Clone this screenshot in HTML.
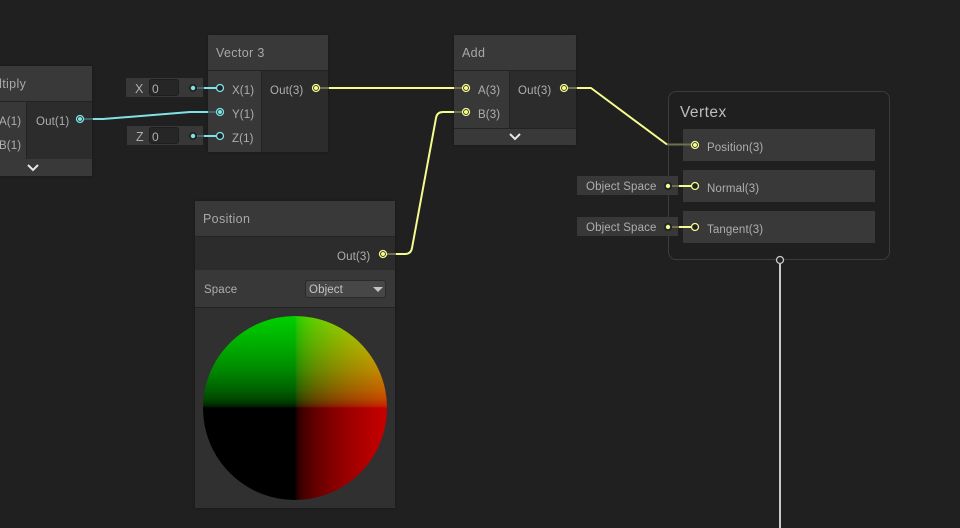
<!DOCTYPE html>
<html><head><meta charset="utf-8"><style>
html,body{margin:0;padding:0;width:960px;height:528px;overflow:hidden;background:#202020}
body{font-family:"Liberation Sans",sans-serif;color:#aeaeae;font-size:11.500px;letter-spacing:.12px}
.b{position:absolute;box-sizing:border-box}
.t{position:absolute;white-space:nowrap;line-height:14px;margin-top:.5px}
.h{font-size:12.500px;letter-spacing:.35px;color:#a8a8a8;margin-top:0}
.v{margin-top:0}
</style></head><body>

<!-- Multiply -->
<div class="b" style="left:-10px;top:66px;width:102px;height:110px;background:#2c2c2c;box-shadow:0 0 2px #181818"></div>
<div class="b" style="left:-10px;top:66px;width:102px;height:36px;background:#393939;border-bottom:1px solid #232323"></div>
<div class="b" style="left:-10px;top:102px;width:37px;height:57px;background:#383838;border-right:1px solid #232323"></div>
<div class="b" style="left:-10px;top:159px;width:102px;height:17px;background:#393939"></div>
<div class="t h" style="left:-19px;top:77px">Multiply</div>
<div class="t" style="left:-1px;top:114px">A(1)</div>
<div class="t" style="left:-1px;top:138px">B(1)</div>
<div class="t" style="left:36px;top:114px">Out(1)</div>

<!-- Vector 3 -->
<div class="b" style="left:208px;top:35px;width:120px;height:117px;background:#2c2c2c;box-shadow:0 0 2px #181818"></div>
<div class="b" style="left:208px;top:35px;width:120px;height:36px;background:#393939;border-bottom:1px solid #232323"></div>
<div class="b" style="left:208px;top:71px;width:54px;height:81px;background:#383838;border-right:1px solid #232323"></div>
<div class="t h" style="left:216px;top:46px">Vector 3</div>
<div class="t" style="left:232px;top:83px">X(1)</div>
<div class="t" style="left:232px;top:107px">Y(1)</div>
<div class="t" style="left:232px;top:131px">Z(1)</div>
<div class="t" style="left:270px;top:83px">Out(3)</div>

<!-- X / Z chips -->
<div class="b" style="left:126px;top:78px;width:77px;height:19px;background:#383838"></div>
<div class="b" style="left:149px;top:79px;width:30px;height:17px;background:#262626;border:1px solid #1e1e1e;border-radius:3px"></div>
<div class="t" style="left:135px;top:81px;font-size:12.500px">X</div>
<div class="t" style="left:152px;top:81px;font-size:12px">0</div>
<div class="b" style="left:127px;top:126px;width:76px;height:19px;background:#383838"></div>
<div class="b" style="left:149px;top:127px;width:30px;height:17px;background:#262626;border:1px solid #1e1e1e;border-radius:3px"></div>
<div class="t" style="left:136px;top:129px;font-size:12.500px">Z</div>
<div class="t" style="left:152px;top:129px;font-size:12px">0</div>

<!-- Add -->
<div class="b" style="left:454px;top:35px;width:122px;height:110px;background:#2c2c2c;box-shadow:0 0 2px #181818"></div>
<div class="b" style="left:454px;top:35px;width:122px;height:36px;background:#393939;border-bottom:1px solid #232323"></div>
<div class="b" style="left:454px;top:71px;width:56px;height:57px;background:#383838;border-right:1px solid #232323"></div>
<div class="b" style="left:454px;top:128px;width:122px;height:17px;background:#393939;border-top:1px solid #232323"></div>
<div class="t h" style="left:462px;top:46px">Add</div>
<div class="t" style="left:478px;top:83px">A(3)</div>
<div class="t" style="left:478px;top:107px">B(3)</div>
<div class="t" style="left:518px;top:83px">Out(3)</div>

<!-- Vertex -->
<div class="b" style="left:668px;top:91px;width:222px;height:169px;background:#1f1f1f;border:1px solid #3c3c3c;border-radius:8px"></div>
<div class="t v" style="left:680px;top:104px;font-size:15.500px;line-height:17px;letter-spacing:.45px;color:#bdbdbd">Vertex</div>
<div class="b" style="left:683px;top:129px;width:192px;height:32px;background:#393939"></div>
<div class="b" style="left:683px;top:170px;width:192px;height:32px;background:#393939"></div>
<div class="b" style="left:683px;top:211px;width:192px;height:32px;background:#393939"></div>
<div class="t v" style="left:707px;top:141px">Position(3)</div>
<div class="t v" style="left:707px;top:182px">Normal(3)</div>
<div class="t v" style="left:707px;top:223px">Tangent(3)</div>
<div class="b" style="left:577px;top:176px;width:101px;height:19px;background:#383838"></div>
<div class="b" style="left:577px;top:217px;width:101px;height:19px;background:#383838"></div>
<div class="t" style="left:586px;top:179px">Object Space</div>
<div class="t" style="left:586px;top:220px">Object Space</div>

<!-- Position -->
<div class="b" style="left:195px;top:201px;width:200px;height:307px;background:#303030;box-shadow:0 0 2px #181818"></div>
<div class="b" style="left:195px;top:201px;width:200px;height:36px;background:#393939;border-bottom:1px solid #232323"></div>
<div class="b" style="left:195px;top:237px;width:200px;height:33px;background:#2c2c2c"></div>
<div class="b" style="left:195px;top:270px;width:200px;height:38px;background:#383838;border-bottom:1px solid #232323"></div>
<div class="t h" style="left:203px;top:212px">Position</div>
<div class="t" style="left:337px;top:249px">Out(3)</div>
<div class="t" style="left:204px;top:282px">Space</div>
<div class="b" style="left:305px;top:280px;width:81px;height:18px;background:#474747;border:1px solid #2a2a2a;border-radius:3px"></div>
<div class="t" style="left:309px;top:282px;color:#c4c4c4">Object</div>
<div class="b" style="left:373px;top:287px;width:0;height:0;border-left:5px solid transparent;border-right:5px solid transparent;border-top:5px solid #c4c4c4"></div>
<div class="b" style="left:203px;top:316px;width:184px;height:184px;border-radius:50%;
background:linear-gradient(to right,#000 50%,rgb(34,0,0) 51%,rgb(52,0,0) 52.5%,rgb(70,0,0) 55%,rgb(96,0,0) 60%,rgb(130,0,0) 70%,rgb(158,0,0) 80%,rgb(180,0,0) 90%,rgb(200,0,0) 100%),linear-gradient(to top,#000 50%,rgb(0,34,0) 51%,rgb(0,52,0) 52.5%,rgb(0,72,0) 55%,rgb(0,98,0) 60%,rgb(0,135,0) 70%,rgb(0,163,0) 80%,rgb(0,186,0) 90%,rgb(0,208,0) 100%);background-blend-mode:screen"></div>

<svg class="b" style="left:0;top:0" width="960" height="528" viewBox="0 0 960 528" fill="none">
<!-- dim stubs yellow -->
<g stroke="#6e7050" stroke-width="2">
<path d="M316 88H329M454 88H466M454 112H466M564 88H577M383 254H396M667 144.500H695M668 186H679M668 227H679"/>
</g>
<g stroke="#44666a" stroke-width="2">
<path d="M80 119H93M208 112H220M193 88H204M193 136H204"/>
</g>
<!-- bright wires -->
<g stroke="#f5fb8f" stroke-width="2" stroke-linejoin="round">
<path d="M329 88H454"/>
<path d="M396 254H405Q411 254 412 248L436 118Q437 112 443 112H454"/>
<path d="M577 88H591L667 144.500"/>
<path d="M679 186H691M679 227H691"/>
</g>
<g stroke="#7fe3e6" stroke-width="2">
<path d="M93 119H103L190 112H208"/>
<path d="M204 88H216M204 136H216"/>
</g>
<path d="M780 264V528" stroke="#c8c8c8" stroke-width="2"/>
<!-- chip dots -->
<g fill="#222"><circle cx="193" cy="88" r="4"/><circle cx="193" cy="136" r="4"/><circle cx="668" cy="186" r="4"/><circle cx="668" cy="227" r="4"/></g>
<g fill="#7fe3e6"><circle cx="193" cy="88" r="2.200"/><circle cx="193" cy="136" r="2.200"/></g>
<g fill="#f5fb8f"><circle cx="668" cy="186" r="2.200"/><circle cx="668" cy="227" r="2.200"/></g>
<!-- ports cyan -->
<g stroke="#7fe3e6" stroke-width="1.300" fill="#222">
<circle cx="80" cy="119" r="3.500"/><circle cx="220" cy="88" r="3.500"/><circle cx="220" cy="112" r="3.500"/><circle cx="220" cy="136" r="3.500"/>
</g>
<g fill="#7fe3e6"><circle cx="80" cy="119" r="2"/><circle cx="220" cy="112" r="2"/></g>
<!-- ports yellow -->
<g stroke="#f5fb8f" stroke-width="1.300" fill="#222">
<circle cx="316" cy="88" r="3.500"/><circle cx="466" cy="88" r="3.500"/><circle cx="466" cy="112" r="3.500"/><circle cx="564" cy="88" r="3.500"/><circle cx="383" cy="254" r="3.500"/><circle cx="695" cy="145" r="3.500"/><circle cx="695" cy="186" r="3.500"/><circle cx="695" cy="227" r="3.500"/>
</g>
<g fill="#f5fb8f"><circle cx="316" cy="88" r="2"/><circle cx="466" cy="88" r="2"/><circle cx="466" cy="112" r="2"/><circle cx="564" cy="88" r="2"/><circle cx="383" cy="254" r="2"/><circle cx="695" cy="145" r="2"/></g>
<circle cx="780" cy="260" r="3.500" stroke="#c8c8c8" stroke-width="1.300" fill="#222"/>
<!-- chevrons -->
<g stroke="#e6e6e6" stroke-width="2">
<path d="M28 165L33 170L38 165"/>
<path d="M510 134L515 139L520 134"/>
</g>
</svg>
</body></html>
